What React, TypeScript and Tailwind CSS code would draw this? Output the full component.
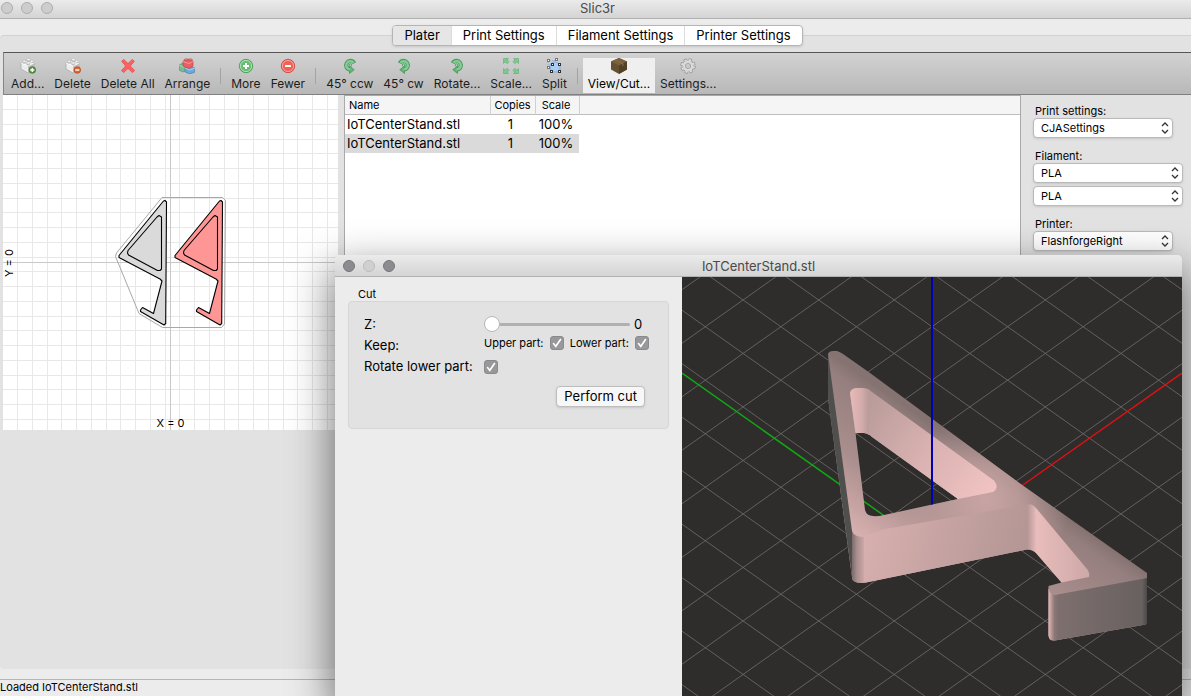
import React, { useState } from "react";
import clsx from "clsx";

const App: React.FC = () => {
  return (
    <div className="relative flex h-screen flex-col overflow-hidden bg-[#ececec] font-['Inter','Liberation_Sans',sans-serif] text-[13px] text-black">
      <TitleBar />
      <main className="relative flex flex-1 flex-col pt-4">
        <Tabs />
        <div className="flex flex-1 flex-col rounded-l border-t border-[#d2d2d2] bg-[#e2e2e2] pl-[3px] pt-4">
          <Toolbar />
          <div className="flex flex-1">
            <div className="w-[335px] shrink-0">
              <Bed />
            </div>
            <ObjectList />
            <PresetPanel />
          </div>
        </div>
      </main>
      <footer className="mt-2.5 h-[17px] border-t border-[#b4b4b4] text-[11px] leading-[15px]">
        Loaded IoTCenterStand.stl
      </footer>
      <CutWindow />
    </div>
  );
};

export default App;

const TitleBar = () => (
  <header className="relative flex h-[19px] shrink-0 items-center justify-center border-b border-[#b1b1b1] bg-gradient-to-b from-[#ebebeb] to-[#d4d4d4] pl-1 text-[#4a4a4a]">
    <div className="absolute left-px top-0.5 flex gap-2">
      {[0, 1, 2].map((i) => (
        <span
          key={i}
          className="h-3 w-3 rounded-full border border-[#adadad] bg-[#cdcdcd]"
        />
      ))}
    </div>
    <h1>Slic3r</h1>
  </header>
);

const Tabs = () => {
  const [active, setActive] = useState("Plater");
  const tabs = [
    "Plater",
    "Print Settings",
    "Filament Settings",
    "Printer Settings",
  ];

  return (
    <nav className="absolute inset-x-0 top-1.5 flex justify-center pl-1">
      <div className="flex h-[21px] overflow-hidden rounded border border-[#b5b5b5] bg-white shadow-sm">
        {tabs.map((tab) => (
          <button
            key={tab}
            onClick={() => setActive(tab)}
            className={clsx(
              "border-l border-[#dcdcdc] px-[11px] leading-[19px] first:border-l-0",
              tab === active && "bg-[#e6e6e6]",
            )}
          >
            {tab}
          </button>
        ))}
      </div>
    </nav>
  );
};

/* ---------- toolbar ---------- */

const Brick = () => (
  <>
    <path d="M1 5 7 2l7 3v6l-6 4-7-4z" fill="#ececec" stroke="#a5a5a5" strokeWidth=".7" />
    <path d="m8 8 6-3v6l-6 4z" fill="#bdbdbd" />
    <path d="M1 5l7 3 6-3" fill="none" stroke="#fff" strokeWidth=".8" />
    <path d="M2.5 3.2v1.6c0 1.3 3.6 1.3 3.6 0V3.2z" fill="#c4c4c4" />
    <ellipse cx="4.3" cy="3.2" rx="1.8" ry="1" fill="#fff" stroke="#aaa" strokeWidth=".5" />
    <path d="M6.7 1.5v1.4c0 1.3 3.6 1.3 3.6 0V1.5z" fill="#c4c4c4" />
    <ellipse cx="8.5" cy="1.5" rx="1.8" ry="1" fill="#fff" stroke="#aaa" strokeWidth=".5" />
    <path d="M6.4 5v1.4c0 1.3 3.6 1.3 3.6 0V5z" fill="#c4c4c4" />
    <ellipse cx="8.2" cy="5" rx="1.8" ry="1" fill="#fff" stroke="#aaa" strokeWidth=".5" />
    <ellipse cx="11.8" cy="3.3" rx="1.7" ry="1" fill="#fff" stroke="#aaa" strokeWidth=".5" />
  </>
);

const TurnCw = () => (
  <>
    <path
      d="M3.8 5.2A4.300 4.300 0 1 1 8 11.500"
      fill="none"
      stroke="#4a9d5f"
      strokeWidth="4.200"
    />
    <path d="M8.500 8.200V15.500L3.800 11.700z" fill="#62b577" stroke="#3f8f54" strokeWidth=".7" />
    <path
      d="M4.400 4.900A4.100 4.100 0 1 1 7.600 11.400"
      fill="none"
      stroke="#86ca97"
      strokeWidth="2.400"
    />
    <circle cx="7.600" cy="7.200" r="1.300" fill="none" stroke="#4a9d5f" strokeWidth=".9" />
  </>
);

const icons: Record<string, React.ReactNode> = {
  add: (
    <>
      <Brick />
      <circle cx="12.3" cy="12" r="3.3" fill="#5d9a46" stroke="#35702a" strokeWidth=".7" />
      <path d="M10.3 12h4M12.3 10v4" stroke="#fff" strokeWidth="1.3" />
    </>
  ),
  remove: (
    <>
      <Brick />
      <circle cx="12.3" cy="12" r="3.3" fill="#e3672d" stroke="#b5441a" strokeWidth=".7" />
      <path d="M10.3 12h4" stroke="#fff" strokeWidth="1.4" />
    </>
  ),
  cross: (
    <path
      d="M3.8 1.5 8 5.6l4.2-4.1 2.2 1.8L10.3 8l4.3 4.6-2.2 2L8 10.4l-4.3 4.2-2.2-2L5.7 8 1.6 3.3z"
      fill="#fb6360"
      stroke="#e8403f"
      strokeWidth=".7"
    />
  ),
  bricks: (
    <>
      <path d="m0 7 4-2 4 2v5l-4 2-4-2z" fill="#7cb991" stroke="#4e8c65" strokeWidth=".6" />
      <path d="m0 7 4 2 4-2" fill="none" stroke="#b3dcc1" strokeWidth=".8" />
      <path d="m6 10 5-2 5 2v4l-5 2-5-2z" fill="#6fa8d6" stroke="#3d77ac" strokeWidth=".6" />
      <path d="m6 10 5 2 5-2" fill="none" stroke="#b7d8f0" strokeWidth=".8" />
      <path d="m4 3 5-2 5 2v5l-4 2.500-6-2.500z" fill="#ee5d60" stroke="#c13639" strokeWidth=".6" />
      <path d="m4 3.500 6 2 4-2" fill="none" stroke="#ffa5a3" strokeWidth=".8" />
      <ellipse cx="7" cy="1.800" rx="1.800" ry="1" fill="#f78183" stroke="#c13639" strokeWidth=".5" />
      <ellipse cx="11.500" cy="1.800" rx="1.800" ry="1" fill="#f78183" stroke="#c13639" strokeWidth=".5" />
    </>
  ),
  more: (
    <>
      <circle cx="8" cy="8" r="6.7" fill="#69bd73" stroke="#3f9a50" strokeWidth=".8" />
      <circle cx="8" cy="8" r="5.6" fill="none" stroke="#b4e2ba" strokeWidth=".9" />
      <path d="M5 8h6M8 5v6" stroke="#fff" strokeWidth="2" />
    </>
  ),
  fewer: (
    <>
      <circle cx="8" cy="8" r="6.7" fill="#ef6257" stroke="#cf4038" strokeWidth=".8" />
      <circle cx="8" cy="8" r="5.6" fill="none" stroke="#f9aaa3" strokeWidth=".9" />
      <path d="M5 8h6" stroke="#fff" strokeWidth="2" />
    </>
  ),
  ccw: (
    <g transform="translate(16 0) scale(-1 1)">
      <TurnCw />
    </g>
  ),
  cw: <TurnCw />,
  scale: (
    <g fill="#7cc88f" stroke="#4fa869" strokeWidth=".5">
      <path d="M.500.500h5L4.200 1.800l1.800 1.900L4 5.700 2.200 3.800.500 5.500z" />
      <path d="M15.500.500h-5l1.300 1.300L10 3.700l2 2 1.800-1.900 1.700 1.700z" />
      <path d="M.500 15.500h5l-1.300-1.300L6 12.300l-2-2-1.800 1.900L.500 10.500z" />
      <path d="M15.500 15.500h-5l1.300-1.300-1.800-1.900 2-2 1.800 1.900 1.700-1.700z" />
    </g>
  ),
  split: (
    <>
      <path d="M4 6.500 8 3.500l6 2.500v8H5z" fill="#a9cdf6" stroke="#6fa0dc" strokeWidth=".7" />
      <path d="M2 2.500h8M2 9V2.500" stroke="#98a6b8" strokeWidth=".8" strokeDasharray="1 1" />
      <g fill="#fff" stroke="#777" strokeWidth="1">
        <rect x="1.500" y="1.500" width="2" height="2" />
        <rect x="9.500" y=".500" width="2" height="2" />
        <rect x="1.500" y="8.500" width="2" height="2" />
      </g>
      <g fill="#fff" stroke="#333" strokeWidth="1">
        <rect x="5.500" y="5.500" width="2" height="2" />
        <rect x="12.500" y="5.500" width="2" height="2" />
        <rect x="4.500" y="12.500" width="2" height="2" />
        <rect x="12.500" y="12.500" width="2" height="2" />
      </g>
    </>
  ),
  box: (
    <>
      <path d="m8 0 8 3.500v8L8 16l-8-4.500v-8z" fill="#65502f" />
      <path d="m8 0 8 3.500L8 7.500 0 3.500z" fill="#77603a" />
      <path d="M8 7.500V16l8-4.500v-8z" fill="#524127" />
      <path d="m4 1.800 8 3.700v2.500" fill="none" stroke="#8a7048" strokeWidth="1" />
    </>
  ),
  gear: (
    <>
      <circle cx="8" cy="8" r="6.200" fill="none" stroke="#8e8e8e" strokeWidth="3" strokeDasharray="2.900 1.970" />
      <circle cx="8" cy="8" r="4.200" fill="none" stroke="#8e8e8e" strokeWidth="4" />
      <circle cx="8" cy="8" r="6" fill="none" stroke="#dedede" strokeWidth="2" strokeDasharray="2 2.712" strokeDashoffset="-.4" />
      <circle cx="8" cy="8" r="4.200" fill="none" stroke="#d9d9d9" strokeWidth="2.900" />
    </>
  ),
};

const groups = [
  [
    { icon: "add", label: "Add..." },
    { icon: "remove", label: "Delete" },
    { icon: "cross", label: "Delete All" },
    { icon: "bricks", label: "Arrange" },
  ],
  [
    { icon: "more", label: "More" },
    { icon: "fewer", label: "Fewer" },
  ],
  [
    { icon: "ccw", label: "45° ccw" },
    { icon: "cw", label: "45° cw" },
    { icon: "cw", label: "Rotate..." },
    { icon: "scale", label: "Scale..." },
    { icon: "split", label: "Split" },
  ],
  [
    { icon: "box", label: "View/Cut..." },
    { icon: "gear", label: "Settings..." },
  ],
];

const Toolbar = () => (
  <div
    role="toolbar"
    className="flex h-[43px] shrink-0 items-end border border-r-0 border-b-[#808080] border-l-[#858585] border-t-[#555] bg-gradient-to-b from-[#d2d2d2] to-[#b8b8b8] pb-px pl-0.5"
  >
    {groups.map((group, i) => (
      <div key={i} className="flex items-center">
        {i > 0 && <span className="mx-[5px] h-4 w-px bg-[#a3a3a3]" />}
        {group.map(({ icon, label }) => (
          <button
            key={label}
            className={clsx(
              "flex h-[35px] flex-col items-center px-[5px] text-xs leading-4",
              icon === "box" ? "bg-[#efefef]" : "text-[#1c1c1c]",
            )}
          >
            <svg viewBox="0 0 16 16" className="h-4 w-4 shrink-0">
              {icons[icon]}
            </svg>
            <span className="mt-0.5">{label}</span>
          </button>
        ))}
      </div>
    ))}
  </div>
);

/* ---------- print bed ---------- */

const standOutline =
  "M165 200.500 166.500 202 165.700 323.500 164 325 140.500 311.500 140.500 310 142.500 307.500 153.500 313.500 162 281 160 279 119 257.500 119 255.500 163.500 201z";
const standHole =
  "M159 215.500 161.500 217 161.500 269 160 270.500 157.500 270.500 128.500 255 127.500 253 128 250.500 157 217z";

const Bed = () => {
  const lines = Array.from({ length: 23 }, (_, i) => Math.round(i * 14.75));

  return (
    <svg viewBox="3 95 335 335" className="block w-full bg-white">
      <g stroke="#e8e8e8" shapeRendering="crispEdges">
        {lines.map((n) => (
          <path key={n} d={`M${n + 17.5} 95v335M3 ${n + 109.5}h335`} />
        ))}
        <path d="M170.500 95v335M3 262.500h335" stroke="#c8c8c8" />
      </g>
      <path
        d="M162 197.500H222.500L225.500 200.500 224.500 324 221.500 327.500H162.500L139 313.500 115.500 256.500 116.500 253z"
        fill="none"
        stroke="#a8a8a8"
      />
      <g stroke="#000" strokeWidth="1.100" strokeLinejoin="round">
        <g fill="#dadada">
          <path d={standOutline} />
          <path d={standHole} />
        </g>
        <g fill="#ff9696" transform="translate(56 0)">
          <path d={standOutline} />
          <path d={standHole} />
        </g>
      </g>
      <g fontSize="11" textAnchor="middle">
        <text x="170.500" y="427">
          X = 0
        </text>
        <text transform="translate(13 263) rotate(-90)">Y = 0</text>
      </g>
    </svg>
  );
};

/* ---------- object list ---------- */

const objects = [
  { name: "IoTCenterStand.stl", copies: 1, scale: "100%" },
  { name: "IoTCenterStand.stl", copies: 1, scale: "100%" },
];

const ObjectList = () => {
  const [selected, setSelected] = useState(1);

  return (
    <div className="ml-1.5 flex-1 border-x border-t border-[#a9a9a9] bg-white">
      <table className="w-full table-fixed border-collapse text-left">
        <thead className="h-[18px] border-b border-[#bdbdbd] bg-[#f5f5f5] text-[11px] leading-4">
          <tr>
            <th className="w-[145px] border-r border-[#d0d0d0] pl-1 font-normal">
              Name
            </th>
            <th className="w-[45px] border-r border-[#d0d0d0] text-center font-normal">
              Copies
            </th>
            <th className="w-11 border-r border-[#d0d0d0] pr-0.5 text-center font-normal">
              Scale
            </th>
            <th />
          </tr>
        </thead>
        <tbody>
          {objects.map((o, i) => (
            <tr
              key={i}
              onClick={() => setSelected(i)}
              className={clsx(
                "h-[19px] leading-[19px]",
                i === selected && "[&>td:not(:last-child)]:bg-[#dadada]",
              )}
            >
              <td className="pl-0.5">{o.name}</td>
              <td className="pr-1 text-center">{o.copies}</td>
              <td className="pr-0.5 text-center">{o.scale}</td>
              <td />
            </tr>
          ))}
        </tbody>
      </table>
    </div>
  );
};

/* ---------- presets ---------- */

const Preset = ({
  value,
  label,
  short,
}: {
  value: string;
  label: string;
  short?: boolean;
}) => (
  <div className={clsx("relative", short ? "w-[140px]" : "w-[150px]")}>
    <select
      aria-label={label}
      defaultValue={value}
      className="block h-5 w-full appearance-none rounded border border-[#b9b9b9] bg-white pl-[7px] text-[11px] leading-4 shadow-sm"
    >
      <option>{value}</option>
    </select>
    <svg
      viewBox="0 0 8 12"
      className="pointer-events-none absolute right-1 top-1 h-3 w-2"
      fill="none"
      stroke="#333"
      strokeWidth="1.300"
    >
      <path d="m1 4 3-3 3 3M1 8l3 3 3-3" />
    </svg>
  </div>
);

const PresetPanel = () => (
  <aside className="flex w-[170px] shrink-0 flex-col gap-[11px] pl-3 pt-[9px] text-[11px] leading-[14px]">
    <div>
      <p className="pl-0.5">Print settings:</p>
      <Preset label="Print settings" value="CJASettings" short />
    </div>
    <div>
      <p className="pl-0.5">Filament:</p>
      <div className="flex flex-col gap-[3px]">
        <Preset label="Filament 1" value="PLA" />
        <Preset label="Filament 2" value="PLA" />
      </div>
    </div>
    <div>
      <p className="pl-0.5">Printer:</p>
      <Preset label="Printer" value="FlashforgeRight" short />
    </div>
  </aside>
);

/* ---------- cut window ---------- */

const Check = ({ id }: { id: string }) => (
  <span className="relative block h-3.5 w-3.5">
    <input
      id={id}
      type="checkbox"
      defaultChecked
      className="peer block h-3.5 w-3.5 appearance-none rounded-[3px] border border-[#8a8a8d] bg-white checked:bg-[#98989b]"
    />
    <svg
      viewBox="0 0 14 14"
      className="pointer-events-none absolute inset-0 hidden peer-checked:block"
      fill="none"
      stroke="#fff"
      strokeWidth="1.600"
      strokeLinecap="round"
    >
      <path d="m3.500 7.500 2.300 2.800L10.500 3.500" />
    </svg>
  </span>
);

const CutWindow = () => {
  const [z, setZ] = useState(0);

  return (
    <section className="absolute bottom-0 left-[335px] right-[9px] top-[255px] flex flex-col overflow-hidden rounded-t-[5px] bg-[#ececec] shadow-[0_16px_40px_4px_rgba(0,0,0,0.5)]">
      <header className="relative flex h-[22px] shrink-0 items-center justify-center border-b border-[#b1b1b1] bg-gradient-to-b from-[#ebebeb] to-[#d4d4d4] text-[#4a4a4a]">
        <div className="absolute left-2 top-[5px] flex gap-2">
          <span className="h-3 w-3 rounded-full border border-[#77777a] bg-[#8c8c90]" />
          <span className="h-3 w-3 rounded-full border border-[#bbb] bg-[#d0d0d0]" />
          <span className="h-3 w-3 rounded-full border border-[#77777a] bg-[#8c8c90]" />
        </div>
        <h2 className="leading-[22px]">IoTCenterStand.stl</h2>
      </header>
      <div className="flex min-h-0 flex-1">
        <div className="w-[347px] shrink-0 px-[13px] pt-2.5">
          <h3 className="pl-2.5 text-[11px] leading-[14px]">Cut</h3>
          <div className="flex h-32 flex-col rounded border border-[#d6d6d6] bg-[#e2e2e2] px-[15px] pt-3">
            <div className="grid grid-cols-[120px_1fr] items-center leading-[21px]">
              <label htmlFor="z">Z:</label>
              <div className="flex items-center gap-1">
                <input
                  id="z"
                  type="range"
                  min={0}
                  max={100}
                  value={z}
                  onChange={(e) => setZ(Number(e.target.value))}
                  className="h-4 w-[146px] appearance-none bg-transparent [&::-webkit-slider-runnable-track]:h-[3px] [&::-webkit-slider-runnable-track]:rounded-full [&::-webkit-slider-runnable-track]:bg-[#b0b0b0] [&::-webkit-slider-thumb]:-mt-[7px] [&::-webkit-slider-thumb]:h-4 [&::-webkit-slider-thumb]:w-4 [&::-webkit-slider-thumb]:appearance-none [&::-webkit-slider-thumb]:rounded-full [&::-webkit-slider-thumb]:border [&::-webkit-slider-thumb]:border-[#b8b8b8] [&::-webkit-slider-thumb]:bg-white"
                />
                <output htmlFor="z">{z}</output>
              </div>
              <span>Keep:</span>
              <div className="flex h-[21px] items-start justify-between pr-1 pt-px text-[11px] leading-[14px]">
                <label htmlFor="upper">Upper part:</label>
                <Check id="upper" />
                <label htmlFor="lower">Lower part:</label>
                <Check id="lower" />
              </div>
              <label htmlFor="rotate">Rotate lower part:</label>
              <Check id="rotate" />
            </div>
            <button className="mr-2 mt-[9px] h-[21px] self-end rounded border border-[#bdbdbd] bg-[#f7f7f7] px-[7px] leading-[19px] shadow-sm">
              Perform cut
            </button>
          </div>
        </div>
        <div className="min-w-0 flex-1 bg-[#2f2d2c]">
          <Scene />
        </div>
      </div>
    </section>
  );
};

// whole part seen from above, with the triangular opening left out
const body =
  "M828 354Q829 351 833 351H837Q840 352 843 354L870 373 1020 483.500 1147 573V623Q1146 625 1143 625L1055 640.500Q1048.500 641 1048.500 635V586L1061.500 582.500 1036 553Q1032 549 1027 549.500L866 582.500Q852 584 852 577L828 398zM855.500 433H864Q868 433 872 437L958 499 884 515Q867 519 865 510z";

const Scene = () => {
  // both line families cross every 53.5 units along the blue axis
  const offsets = Array.from({ length: 22 }, (_, i) => 326.7 + (i - 9) * 53.5);

  return (
    <svg
      viewBox="682 277 500 419"
      preserveAspectRatio="xMidYMid slice"
      className="block h-full w-full"
    >
      <defs>
        <linearGradient id="top" gradientUnits="userSpaceOnUse" x1="940" y1="430" x2="865" y2="538">
          <stop offset="0" stopColor="#857372" />
          <stop offset=".1" stopColor="#957f7e" />
          <stop offset=".55" stopColor="#a98e8d" />
          <stop offset="1" stopColor="#d6afae" />
        </linearGradient>
        <radialGradient id="glow" gradientUnits="userSpaceOnUse" cx="985" cy="500" r="85">
          <stop offset="0" stopColor="#c8a5a4" />
          <stop offset=".4" stopColor="#c4a2a1" stopOpacity=".75" />
          <stop offset="1" stopColor="#c4a2a1" stopOpacity="0" />
        </radialGradient>
        <linearGradient id="front" gradientUnits="userSpaceOnUse" x1="870" y1="520" x2="1030" y2="560">
          <stop offset="0" stopColor="#d6afae" />
          <stop offset="1" stopColor="#b29594" />
        </linearGradient>
        <linearGradient id="wall" gradientUnits="userSpaceOnUse" x1="868" y1="400" x2="990" y2="490">
          <stop offset="0" stopColor="#b89b9a" />
          <stop offset=".5" stopColor="#d8b1b0" />
          <stop offset="1" stopColor="#f0c3c2" />
        </linearGradient>
        <linearGradient id="corner">
          <stop offset="0" stopColor="#e7bbba" />
          <stop offset=".6" stopColor="#d3acab" />
          <stop offset="1" stopColor="#b89b9a" />
        </linearGradient>
        <linearGradient id="edge">
          <stop offset="0" stopColor="#7a6c6b" />
          <stop offset=".4" stopColor="#a88e8d" />
          <stop offset="1" stopColor="#cca7a6" />
        </linearGradient>
        <linearGradient id="bend">
          <stop offset="0" stopColor="#b29594" />
          <stop offset="1" stopColor="#e6baba" />
        </linearGradient>
        <linearGradient id="notch">
          <stop offset="0" stopColor="#e9bdbc" />
          <stop offset="1" stopColor="#cca8a7" />
        </linearGradient>
        <linearGradient id="foot">
          <stop offset="0" stopColor="#e3b8b7" />
          <stop offset=".06" stopColor="#8b7776" />
          <stop offset=".1" stopColor="#7d6f6e" />
          <stop offset=".95" stopColor="#686160" />
          <stop offset="1" stopColor="#494948" />
        </linearGradient>
      </defs>

      <g stroke="#716d6c" strokeWidth=".8">
        {offsets.map((y) => (
          <path
            key={y}
            d={`M682 ${y - 177}L1182 ${y + 177}M682 ${y + 177}L1182 ${y - 177}`}
          />
        ))}
      </g>
      <path d="M682 373 886 517" stroke="#12a812" strokeWidth="1.500" />
      <path d="M1020 487 1182 373" stroke="#e01010" strokeWidth="1.500" />

      <path d={body} fillRule="evenodd" fill="url(#top)" />
      <path d={body} fillRule="evenodd" fill="url(#glow)" />
      <path d="M828 354 852 531V577L828 398z" fill="#4f4f4e" />

      {/* front wall */}
      <path
        d="M863 537 885 529 1027 504.500V549.500L866 582.500H863z"
        fill="url(#front)"
      />
      <path d="M852 531Q854 537 864 537V582.700Q852 584 852 577z" fill="url(#edge)" />

      {/* inside of the triangular opening */}
      <path
        d="M850 393Q851 388 858 388H863Q868 388 872 392L994 480.500Q1000 488 993 492L958 499 872 437Q868 433 864 433H855.500z"
        fill="url(#wall)"
      />
      <path d="M850 393Q851 388 858 388H863L869 390V435Q866 433 864 433H855.500z" fill="url(#corner)" />

      {/* notch and foot */}
      <path d="M1027 504.500Q1032 503 1036 508V553Q1032 549 1027 549.500z" fill="url(#bend)" />
      <path d="M1036 508 1087 569Q1090 573 1089 577L1061.500 582.500 1036 553z" fill="url(#notch)" />
      <path d="M1048.500 588Q1050 595 1055 595L1147 578V623Q1146 625 1143 625L1055 640.500Q1048.500 641 1048.500 635z" fill="url(#foot)" />

      <path d="M932 277V504.500" stroke="#0000b4" strokeWidth="2" />
    </svg>
  );
};
